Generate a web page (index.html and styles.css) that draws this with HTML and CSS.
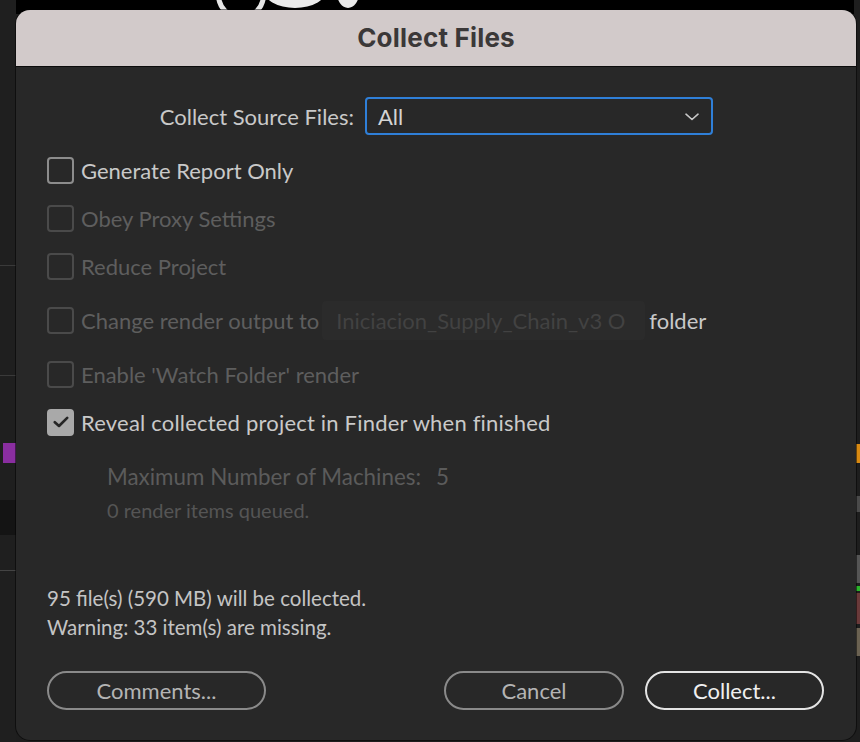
FILE: index.html
```html
<!DOCTYPE html>
<html>
<head>
<meta charset="utf-8">
<link rel="stylesheet" href="styles.css">
</head>
<body>
<div class="desktop">
  <div class="bg-left">
    <div class="bl-line l1"></div>
    <div class="bl-line l2"></div>
    <div class="bl-purple"></div>
    <div class="bl-block b1"></div>
    <div class="bl-block b2"></div>
  </div>
  <div class="bg-top">
    <div class="blob blob1"></div>
    <div class="blob blob2"></div>
    <div class="blob blob3"></div>
  </div>
  <div class="bg-right">
    <div class="br br-orange"></div>
    <div class="br br-grey1"></div>
    <div class="br br-grey2"></div>
    <div class="br br-green"></div>
    <div class="br br-red"></div>
    <div class="br br-tan"></div>
  </div>

  <div class="dialog">
    <div class="titlebar">Collect Files</div>
    <div class="content">
      <div class="row-source">
        <span class="label">Collect Source Files:</span>
        <div class="select">
          <span>All</span>
          <svg class="chev" width="14" height="8" viewBox="0 0 14 8"><path d="M1 1.2 L7 6.5 L13 1.2" fill="none" stroke="#c8c8c8" stroke-width="1.6" stroke-linecap="round" stroke-linejoin="round"/></svg>
        </div>
      </div>

      <div class="check-row">
        <span class="box"></span><span class="text">Generate Report Only</span>
      </div>
      <div class="check-row disabled">
        <span class="box"></span><span class="text">Obey Proxy Settings</span>
      </div>
      <div class="check-row disabled">
        <span class="box"></span><span class="text">Reduce Project</span>
      </div>
      <div class="check-row disabled tall">
        <span class="box"></span><span class="text">Change render output to</span>
        <span class="field">Iniciacion_Supply_Chain_v3 O</span>
        <span class="folder">folder</span>
      </div>
      <div class="check-row disabled">
        <span class="box"></span><span class="text">Enable 'Watch Folder' render</span>
      </div>
      <div class="check-row">
        <span class="box checked"><svg width="16" height="12" viewBox="0 0 16 12"><path d="M1.8 6.2 L6 10 L14.2 1.8" fill="none" stroke="#262626" stroke-width="2.6" stroke-linecap="round" stroke-linejoin="round"/></svg></span>
        <span class="text reveal">Reveal collected project in Finder when finished</span>
      </div>

      <div class="watch">
        <div class="machines"><span>Maximum Number of Machines:</span><span class="num">5</span></div>
        <div class="queued">0 render items queued.</div>
      </div>

      <div class="summary">
        <div>95 file(s) (590 MB) will be collected.</div>
        <div>Warning: 33 item(s) are missing.</div>
      </div>

      <div class="buttons">
        <button class="btn btn-comments">Comments...</button>
        <div class="spacer"></div>
        <button class="btn btn-cancel">Cancel</button>
        <button class="btn btn-collect">Collect...</button>
      </div>
    </div>
  </div>
</div>
</body>
</html>
```
FILE: styles.css
```css
html, body {
  margin: 0;
  padding: 0;
  background: #1b1b1b;
  overflow: hidden;
}

.desktop {
  position: relative;
  width: 860px;
  height: 742px;
  overflow: hidden;
  background: #1e1e1e;
  font-family: "Lato", "Open Sans", sans-serif;
}

/* background app pieces (free canvas) */
.bg-left {
  position: absolute;
  left: 0;
  top: 0;
  width: 16px;
  height: 742px;
  background: #1f1f1f;
}
.bl-line { position: absolute; left: 0; width: 16px; height: 1px; background: #3a3a3a; }
.l1 { top: 265px; }
.l2 { top: 375px; }
.bl-purple { position: absolute; left: 3px; top: 443px; width: 13px; height: 20px; background: #8a2ea0; }
.bl-block { position: absolute; left: 0; width: 16px; background: #141414; }
.b1 { top: 500px; height: 35px; }
.b2 { top: 570px; height: 1px; background: #444; }

.bg-top {
  position: absolute;
  left: 16px;
  top: 0;
  width: 844px;
  height: 14px;
  background: #000;
}
.blob { position: absolute; background: #eaeaea; border-radius: 50%; }
.blob1 { left: 200px; top: -30px; width: 40px; height: 40px; background: transparent; border: 5px solid #e6e6e6; }
.blob2 { left: 247px; top: -30px; width: 64px; height: 38px; }
.blob3 { left: 321px; top: -22px; width: 22px; height: 30px; }

.bg-right {
  position: absolute;
  right: 0;
  top: 0;
  width: 6px;
  height: 742px;
  background: #1e1e1e;
}
.br { position: absolute; left: 0; width: 6px; }
.br-orange { top: 444px; height: 19px; background: #d98a12; }
.br-grey1 { top: 496px; height: 16px; background: #4a4a4a; }
.br-grey2 { top: 555px; height: 28px; background: #555; }
.br-green { top: 586px; height: 5px; background: #2bb52b; }
.br-red { top: 593px; height: 31px; background: #6a3a3a; }
.br-tan { top: 628px; height: 28px; background: #6b6252; }

/* dialog */
.dialog {
  position: absolute;
  left: 16px;
  top: 10px;
  width: 840px;
  height: 730px;
  background: #282828;
  border-radius: 14px;
  overflow: hidden;
  box-shadow: 0 0 0 1px rgba(0,0,0,0.5);
}

.titlebar {
  height: 54px;
  padding-bottom: 2px;
  background: #d2caca;
  border-bottom: 1px solid #0c0c0c;
  display: flex;
  align-items: center;
  justify-content: center;
  font-family: "Inter", "Liberation Sans", sans-serif;
  font-weight: 700;
  font-size: 26px;
  color: #3b3838;
  letter-spacing: 0.2px;
}

.content {
  padding: 30px 31px 0 31px;
  font-size: 22px;
  color: #c9c9c9;
}

.row-source {
  display: flex;
  align-items: center;
  height: 38px;
  margin-bottom: 11px;
}
.row-source .label {
  width: 307px;
  text-align: right;
  margin-right: 11px;
  color: #c9c9c9;
}
.select {
  height: 34px;
  border: 2px solid #2f7fd8;
  border-radius: 4px;
  display: flex;
  align-items: center;
  justify-content: space-between;
  padding: 0 12px 0 11px;
  width: 321px;
  color: #d4d4d4;
}
.chev { margin-top: 1px; }

.check-row {
  display: flex;
  align-items: center;
  height: 48px;
  color: #c9c9c9;
}
.check-row.tall { height: 60px; }
.check-row.disabled { color: #5e5e5e; }
.reveal { letter-spacing: 0.2px; }

.box {
  width: 23px;
  height: 23px;
  border: 2px solid #8c8c8c;
  border-radius: 4px;
  margin-right: 7px;
  flex: none;
  display: flex;
  align-items: center;
  justify-content: center;
}
.check-row.disabled .box { border-color: #4a4a4a; }
.box.checked {
  background: #a9a9a9;
  border-color: #a9a9a9;
}

.field {
  margin-left: 3px;
  height: 39px;
  width: 309px;
  padding-left: 14px;
  background: #2b2b2b;
  border-radius: 4px;
  display: flex;
  align-items: center;
  color: #424242;
  white-space: nowrap;
  overflow: hidden;
}
.folder {
  margin-left: 4px;
  color: #c9c9c9;
}

.watch {
  padding-left: 60px;
  color: #5b5b5b;
  margin-top: 12px;
}
.machines {
  height: 36px;
  display: flex;
  align-items: center;
  font-size: 22.4px;
}
.machines .num { margin-left: 15px; }
.queued {
  height: 32px;
  display: flex;
  align-items: center;
  font-size: 20px;
  color: #555;
}

.summary {
  margin-top: 58px;
  font-size: 20.5px;
  line-height: 29px;
  color: #c4c4c4;
}

.buttons {
  display: flex;
  align-items: center;
  margin-top: 29px;
}
.spacer { flex: 1; }
.btn {
  height: 39px;
  border-radius: 20px;
  background: transparent;
  font-family: "Lato", "Open Sans", sans-serif;
  font-size: 22px;
  border: 2px solid #8a8a8a;
  color: #b4b4b4;
  padding: 0;
}
.btn-comments { width: 219px; }
.btn-cancel { width: 180px; margin-right: 21px; }
.btn-collect { width: 179px; border-color: #e4e4e4; color: #f0f0f0; margin-right: 1px; }
```
